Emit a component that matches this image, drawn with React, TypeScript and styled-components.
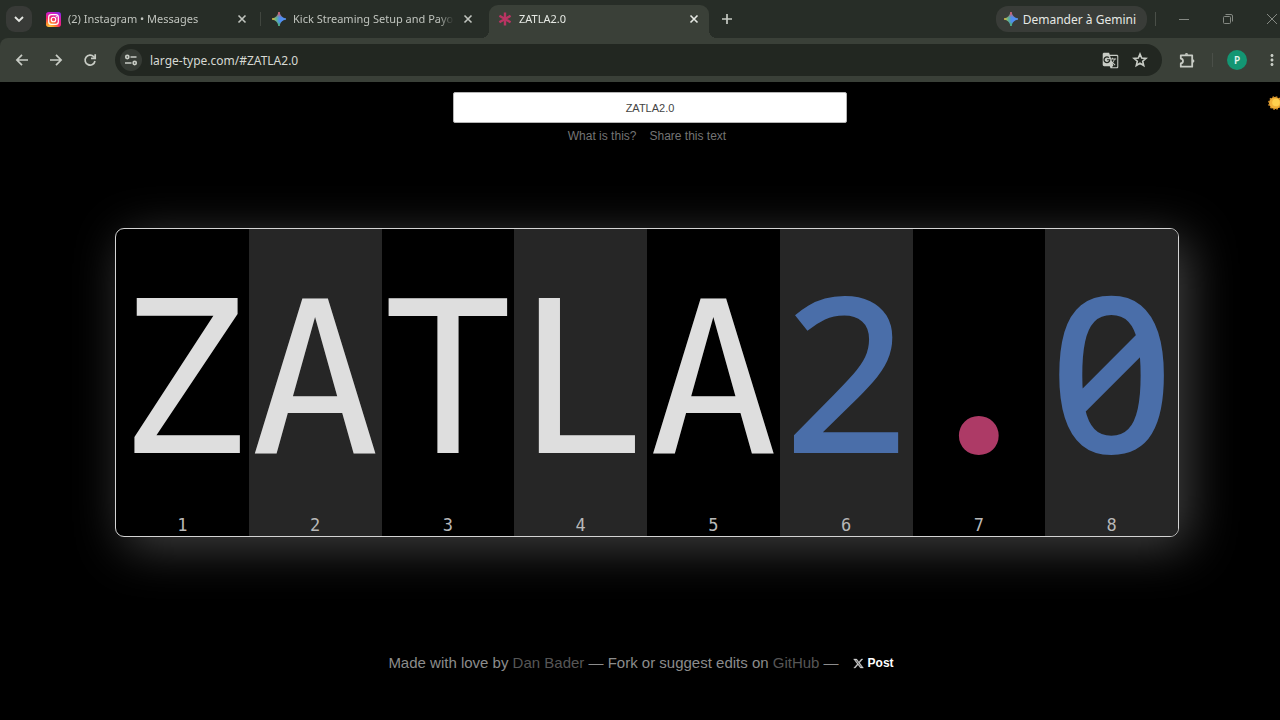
import React, { useState } from 'react';
import styled, { createGlobalStyle } from 'styled-components';
import { MdGTranslate, MdMoreVert } from 'react-icons/md';

const Global = createGlobalStyle`
  * { box-sizing: border-box; }
  html, body, #root { height: 100%; }
  body { margin: 0; background: #000; overflow: hidden; font-family: "Noto Sans", "Open Sans", sans-serif; }
  button { font: inherit; color: inherit; background: none; border: 0; padding: 0; display: flex; align-items: center; justify-content: center; }
  a { color: inherit; text-decoration: none; }
  svg { display: block; flex: none; }
`;

/* The browser window runs slightly past the right edge of the screen. */
const BrowserWindow = styled.div`
  display: flex;
  flex-direction: column;
  width: calc(100% + 14px);
  min-height: 100%;
`;

const TabStrip = styled.header`
  display: flex;
  align-items: center;
  height: 38px;
  padding-left: 6px;
  background: #272d27;
  color: #c6cac4;
`;

const TabSearch = styled.button`
  width: 26px;
  height: 26px;
  margin-right: 5px;
  border-radius: 9px;
  background: #383a37;
  color: #e4e6e2;
`;

const Tabs = styled.div`
  display: flex;
  gap: 6px;
  align-self: flex-end;
`;

const TabItem = styled.div<{ $active?: boolean; $divider?: boolean }>`
  position: relative;
  display: flex;
  align-items: center;
  gap: 7px;
  width: 220px;
  height: 33px;
  padding: 0 8px 5px 9px;
  border-radius: 9px 9px 0 0;
  background: ${p => (p.$active ? '#3a4038' : 'transparent')};
  color: ${p => (p.$active ? '#e6e9e4' : '#c0c4be')};
  &::before, &::after {
    content: '';
    position: absolute;
    bottom: 0;
    width: 8px;
    height: 8px;
    display: ${p => (p.$active ? 'block' : 'none')};
  }
  &::before { left: -8px; background: radial-gradient(circle at 0 0, transparent 8px, #3a4038 8px); }
  &::after { right: -8px; background: radial-gradient(circle at 100% 0, transparent 8px, #3a4038 8px); }
  ${p => p.$divider && `
    &::after {
      display: block; right: -4px; bottom: 12px; width: 1px; height: 14px; background: #41463f;
    }
  `}
`;

const TabTitle = styled.button`
  flex: 1;
  min-width: 0;
  justify-content: flex-start;
  overflow: hidden;
  white-space: nowrap;
  font-size: 11px;
  line-height: 16px;
  mask-image: linear-gradient(90deg, #000 calc(100% - 16px), transparent);
`;

const NewTab = styled.button`
  width: 26px;
  height: 26px;
  margin-left: 5px;
`;

const GeminiButton = styled.button`
  gap: 5px;
  height: 26px;
  margin: 0 8px 0 auto;
  padding: 0 11px 0 8px;
  border-radius: 12px;
  background: #393c38;
  color: #e6e8e4;
  font-size: 12px;
  white-space: nowrap;
`;

const Divider = styled.span`
  width: 1px;
  height: 14px;
  background: #4a4f48;
`;

const WindowButtons = styled.div`
  display: flex;
  padding-left: 6px;
  color: #858983;
  button { width: 44px; height: 38px; }
`;

const Toolbar = styled.nav`
  display: flex;
  align-items: center;
  height: 44px;
  padding: 0 11px;
  background: #3a4038;
  border-radius: 8px 0 0 0;
  color: #c8ccc5;
`;

const CornerFill = styled.div`
  background: #272d27;
`;

const IconButton = styled.button`
  width: 22px;
  height: 28px;
`;

const Navigation = styled.div`
  display: flex;
  gap: 12px;
  margin-right: 14px;
`;

const AddressBar = styled.form`
  display: flex;
  align-items: center;
  flex: 1;
  height: 32px;
  padding: 0 11px 0 5px;
  border-radius: 16px;
  background: #222721;
`;

const AddressActions = styled.div`
  display: flex;
  gap: 8px;
`;

const SiteInfo = styled.button`
  width: 22px;
  height: 22px;
  border-radius: 50%;
  background: #363b35;
`;

const UrlInput = styled.input`
  flex: 1;
  min-width: 0;
  margin-left: 8px;
  padding: 0;
  border: 0;
  outline: 0;
  background: none;
  color: #d6d9d3;
  font: 12px "Noto Sans", sans-serif;
`;

const BrowserActions = styled.div`
  display: flex;
  align-items: center;
  gap: 14px;
  margin-left: 14px;
`;

const Profile = styled.button`
  width: 20px;
  height: 20px;
  border-radius: 50%;
  background: #139673;
  color: #e4f4ee;
  font-size: 10px;
  font-weight: 600;
`;

const Page = styled.div`
  position: relative;
  display: flex;
  flex: 1;
  flex-direction: column;
  background: #000;
  font-family: "Liberation Sans", Arial, sans-serif;
`;

const Controls = styled.div`
  display: flex;
  flex-direction: column;
  align-items: center;
  padding: 10px 0 0 6px;
`;

const TextBox = styled.input`
  width: 394px;
  height: 31px;
  border: 1px solid #b5b5b5;
  border-radius: 2px;
  outline: 0;
  background: #fff;
  color: #444;
  font: 11px "Liberation Sans", Arial, sans-serif;
  text-align: center;
`;

const HelpLinks = styled.nav`
  display: flex;
  gap: 13px;
  padding: 4px 6px 0 0;
  color: #747474;
  font-size: 12px;
  line-height: 18px;
`;

const Stage = styled.main`
  display: flex;
  flex: 1;
  align-items: center;
  padding: 0 115px;
`;

const Board = styled.div`
  display: flex;
  flex: 1;
  overflow: hidden;
  border: 1px solid #d4d4d4;
  border-radius: 9px;
  background: #000;
  box-shadow: 9px 10px 50px rgba(255, 255, 255, 0.26);
`;

const Cell = styled.div`
  flex: 1 1 0;
  display: flex;
  flex-direction: column;
  align-items: center;
  height: 307px;
  &:nth-child(even) { background: #262626; }
`;

type Kind = 'letter' | 'digit' | 'symbol';

const glyphStyles: Record<Kind, string> = {
  letter: 'color: #dedede; font: 400 213px/300px "DejaVu Sans Mono", monospace;',
  digit: 'color: #4a6ea9; font: 500 217px/280px "Noto Sans", sans-serif;',
  symbol: 'color: #ad3a66; font: 900 244px/259px Lato, sans-serif;',
};

const Glyph = styled.span<{ $kind: Kind }>`
  ${p => glyphStyles[p.$kind]}
  height: 280px;
  font-feature-settings: "zero";
`;

const Index = styled.span`
  padding-top: 5px;
  color: #b8b8b8;
  font: 17px/22px "DejaVu Sans Mono", monospace;
`;

const Credits = styled.footer`
  display: flex;
  align-items: center;
  justify-content: center;
  height: 100px;
  padding: 0 12px 14px 0;
  color: #8c8c8c;
  font-size: 15px;
  line-height: 20px;
  a { color: #565656; }
`;

const PostButton = styled.button`
  gap: 4px;
  margin-left: 14px;
  color: #fff;
  font-size: 12px;
  font-weight: 700;
`;

const Badge = styled.button`
  position: absolute;
  top: 14px;
  right: 12px;
`;

const Spark = ({ size = 14, id }: { size?: number; id: string }) => (
  <svg width={size} height={size} viewBox="0 0 14 14">
    <defs>
      <linearGradient id={id + 'a'} x1="0" y1="0" x2="1" y2="0">
        <stop offset="0" stopColor="#f3c33c" /><stop offset=".3" stopColor="#5fb48c" /><stop offset=".55" stopColor="#4d8cf0" /><stop offset="1" stopColor="#5a96f5" />
      </linearGradient>
      <linearGradient id={id + 'b'} x1="0" y1="0" x2="0" y2="1">
        <stop offset="0" stopColor="#e8565a" /><stop offset=".4" stopColor="#e8565a" stopOpacity="0" /><stop offset=".7" stopColor="#4bb36a" stopOpacity="0" /><stop offset="1" stopColor="#4bb36a" />
      </linearGradient>
    </defs>
    <path d="M7 0Q8.3 5.7 14 7Q8.3 8.3 7 14Q5.7 8.3 0 7Q5.7 5.7 7 0Z" fill={`url(#${id}a)`} stroke={`url(#${id}a)`} strokeWidth=".8" />
    <path d="M7 0Q8.3 5.7 14 7Q8.3 8.3 7 14Q5.7 8.3 0 7Q5.7 5.7 7 0Z" fill={`url(#${id}b)`} stroke={`url(#${id}b)`} strokeWidth=".8" />
  </svg>
);

const InstagramIcon = () => (
  <svg width="15" height="15" viewBox="0 0 14 14">
    <defs>
      <radialGradient id="insta" cx=".25" cy="1.05" r="1.15">
        <stop offset="0" stopColor="#ffd447" /><stop offset=".3" stopColor="#ff8a2b" /><stop offset=".58" stopColor="#f5246b" /><stop offset=".85" stopColor="#d21bc0" /><stop offset="1" stopColor="#8a2be2" />
      </radialGradient>
    </defs>
    <rect width="14" height="14" rx="2.5" fill="url(#insta)" />
    <rect x="2.5" y="2.5" width="9" height="9" rx="2.5" fill="none" stroke="#fff" strokeWidth="1.1" />
    <circle cx="7" cy="7" r="2.1" fill="none" stroke="#fff" strokeWidth="1.1" />
    <circle cx="9.6" cy="4.4" r=".6" fill="#fff" />
  </svg>
);

const AsteriskIcon = () => (
  <svg width="14" height="14" viewBox="0 0 14 14" stroke="#b83462" strokeWidth="2.4">
    <path d="M7 .5V13.5M1.4 3.7L12.6 10.3M12.6 3.7L1.4 10.3" />
  </svg>
);

const ChevronIcon = () => (
  <svg width="14" height="14" fill="none" stroke="currentColor" strokeWidth="1.9"><path d="M3 5L7 9L11 5" /></svg>
);
const TabCloseIcon = () => (
  <svg width="14" height="14" stroke="currentColor" strokeWidth="1.6"><path d="M3.5 3.5L10.5 10.5M10.5 3.5L3.5 10.5" /></svg>
);
const PlusIcon = () => (
  <svg width="14" height="14" stroke="currentColor" strokeWidth="1.7"><path d="M7 2V12M2 7H12" /></svg>
);
const BackIcon = () => (
  <svg width="14" height="14" fill="none" stroke="currentColor" strokeWidth="1.7"><path d="M13 7H2.2M7 1.8L1.9 7L7 12.2" /></svg>
);
const ForwardIcon = () => (
  <svg width="14" height="14" fill="none" stroke="currentColor" strokeWidth="1.7"><path d="M1 7H11.8M7 1.8L12.1 7L7 12.2" /></svg>
);
const ReloadIcon = () => (
  <svg width="14" height="14" fill="none" stroke="currentColor" strokeWidth="1.7">
    <path d="M12 8A5 5 0 1 1 10.8 3.7L11.6 4.6" /><path d="M12.2 1.2V5.4H8" />
  </svg>
);
const StarIcon = () => (
  <svg width="16" height="16" fill="none" stroke="currentColor" strokeWidth="1.6">
    <path d="M8 2L9.7 6L14 6.4L10.7 9.2L11.7 13.5L8 11.2L4.3 13.5L5.3 9.2L2 6.4L6.3 6Z" />
  </svg>
);

const TuneIcon = () => (
  <svg width="14" height="14" viewBox="0 0 14 14" fill="none" stroke="currentColor" strokeWidth="1.6">
    <circle cx="3.3" cy="4" r="1.6" /><path d="M6.5 4H12.5M1 10H7.5" /><circle cx="10.7" cy="10" r="1.6" />
  </svg>
);

const ExtensionIcon = () => (
  <svg width="17" height="17" viewBox="0 0 17 17" fill="none" stroke="currentColor" strokeWidth="1.8" strokeLinejoin="round">
    <path d="M1.8 3.3H13.2V14.7H1.8V11.5Q4 11 4 9T1.8 6.5Z" />
    <path d="M5.8 2.8A1.7 1.7 0 0 1 9.2 2.8ZM13.7 7.3A1.7 1.7 0 0 1 13.7 10.7Z" fill="currentColor" stroke="none" />
  </svg>
);

const MinimizeIcon = () => <svg width="10" height="10" stroke="currentColor"><path d="M0 5.5H10" /></svg>;
const RestoreIcon = () => (
  <svg width="10" height="10" fill="none" stroke="currentColor">
    <rect x=".5" y="2.5" width="7" height="7" rx="1" /><path d="M2.5 .5H8Q9.5 .5 9.5 2V7.5" />
  </svg>
);
const CloseIcon = () => <svg width="10" height="10" stroke="currentColor"><path d="M0 0L10 10M10 0L0 10" /></svg>;

const XLogo = () => (
  <svg width="11" height="11" viewBox="0 0 24 24" fill="#d0d0d0" stroke="#d0d0d0" strokeWidth=".8">
    <path d="M18.244 2.25h3.308l-7.227 8.26 8.502 11.24H16.17l-5.214-6.817L4.99 21.75H1.68l7.73-8.835L1.254 2.25H8.08l4.713 6.231zm-1.161 17.52h1.833L7.084 4.126H5.117z" />
  </svg>
);

const SunIcon = () => (
  <svg width="14" height="14" viewBox="0 0 14 14">
    <circle cx="7" cy="7" r="6" fill="#f2b137" />
    <circle cx="7" cy="7" r="6.2" fill="none" stroke="#dd942a" strokeWidth="1.4" strokeDasharray="1.62 1.62" />
    <circle cx="8" cy="6.5" r="3.8" fill="#ffd04e" />
  </svg>
);

const kindOf = (c: string): Kind => (/[0-9]/.test(c) ? 'digit' : /[a-z]/i.test(c) ? 'letter' : 'symbol');

const tabs = [
  { title: '(2) Instagram • Messages', icon: <InstagramIcon />, divider: true },
  { title: 'Kick Streaming Setup and Payouts', icon: <Spark id="kick" /> },
  { title: 'ZATLA2.0', icon: <AsteriskIcon />, active: true },
];

export default function App() {
  const [text, setText] = useState('ZATLA2.0');
  return (
    <>
      <Global />
      <BrowserWindow>
        <TabStrip>
          <TabSearch aria-label="Search tabs"><ChevronIcon /></TabSearch>
          <Tabs>
            {tabs.map(t => (
              <TabItem key={t.title} $active={t.active} $divider={t.divider}>
                {t.icon}
                <TabTitle>{t.title}</TabTitle>
                <button aria-label="Close tab"><TabCloseIcon /></button>
              </TabItem>
            ))}
          </Tabs>
          <NewTab aria-label="New tab"><PlusIcon /></NewTab>
          <GeminiButton><Spark id="gemini" />Demander à Gemini</GeminiButton>
          <Divider />
          <WindowButtons>
            <button aria-label="Minimize"><MinimizeIcon /></button>
            <button aria-label="Restore"><RestoreIcon /></button>
            <button aria-label="Close"><CloseIcon /></button>
          </WindowButtons>
        </TabStrip>
        <CornerFill>
          <Toolbar>
            <Navigation>
              <IconButton aria-label="Back"><BackIcon /></IconButton>
              <IconButton aria-label="Forward"><ForwardIcon /></IconButton>
              <IconButton aria-label="Reload"><ReloadIcon /></IconButton>
            </Navigation>
            <AddressBar onSubmit={e => e.preventDefault()}>
              <SiteInfo type="button" aria-label="Site information"><TuneIcon /></SiteInfo>
              <UrlInput aria-label="Address" defaultValue="large-type.com/#ZATLA2.0" />
              <AddressActions>
                <IconButton type="button" aria-label="Translate"><MdGTranslate size={17} /></IconButton>
                <IconButton type="button" aria-label="Bookmark"><StarIcon /></IconButton>
              </AddressActions>
            </AddressBar>
            <BrowserActions>
              <IconButton aria-label="Extensions"><ExtensionIcon /></IconButton>
              <Divider />
              <Profile aria-label="Profile">P</Profile>
              <IconButton aria-label="Menu"><MdMoreVert size={18} /></IconButton>
            </BrowserActions>
          </Toolbar>
        </CornerFill>
        <Page>
          <Controls>
            <TextBox aria-label="Text to display" value={text} onChange={e => setText(e.target.value)} />
            <HelpLinks>
              <a href="#about">What is this?</a>
              <a href="#share">Share this text</a>
            </HelpLinks>
          </Controls>
          <Stage>
            <Board>
              {[...text].map((c, i) => (
                <Cell key={i}>
                  <Glyph $kind={kindOf(c)}>{c}</Glyph>
                  <Index>{i + 1}</Index>
                </Cell>
              ))}
            </Board>
          </Stage>
          <Credits>
            <span>Made with love by <a href="#dan">Dan Bader</a> — Fork or suggest edits on <a href="#github">GitHub</a> —</span>
            <PostButton><XLogo />Post</PostButton>
          </Credits>
          <Badge aria-label="Theme"><SunIcon /></Badge>
        </Page>
      </BrowserWindow>
    </>
  );
}
